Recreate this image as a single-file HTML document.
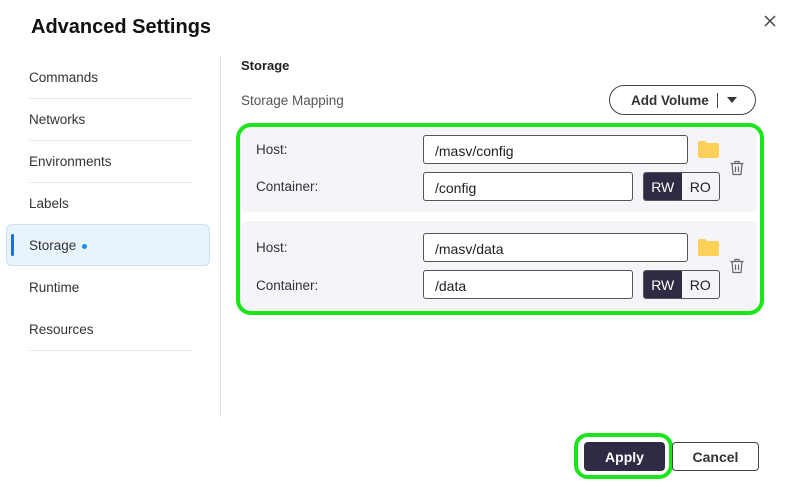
<!DOCTYPE html>
<html><head><style>
*{box-sizing:border-box;margin:0;padding:0}
body{width:791px;height:487px;background:#fff;font-family:"Liberation Sans",sans-serif;color:#222;position:relative;overflow:hidden}
.a{position:absolute}
.t{font-size:13.5px;color:#333}
.div{position:absolute;left:29px;width:163px;height:1px;background:#e3e8ee}
.inp{position:absolute;border:1px solid #555;border-radius:3px;background:#fff;font-size:14px;color:#222;padding:7px 11px 0;height:29px}
.panel{position:absolute;left:241px;width:516px;background:#f4f4f9;border-radius:5px}
.rw{position:absolute;left:643px;width:77px;height:29px;border:1px solid #555;border-radius:3px;display:flex;font-size:14px;overflow:hidden}
.rw span{flex:1;display:flex;align-items:center;justify-content:center}
.rw span:first-child{background:#2e2b45;color:#fff}
</style></head><body>
<div class="a" style="left:31px;top:16px;font-size:20px;font-weight:bold;color:#111">Advanced Settings</div>
<svg class="a" style="left:764px;top:15px" width="12" height="12"><path d="M1 1L11 11M11 1L1 11" stroke="#444" stroke-width="1.5"/></svg>

<div class="a t" style="left:29px;top:70px">Commands</div>
<div class="div" style="top:98px"></div>
<div class="a t" style="left:29px;top:112px">Networks</div>
<div class="div" style="top:140px"></div>
<div class="a t" style="left:29px;top:154px">Environments</div>
<div class="div" style="top:182px"></div>
<div class="a t" style="left:29px;top:196px">Labels</div>
<div class="a" style="left:6px;top:224px;width:204px;height:42px;background:#e8f4fc;border:1px solid #cfe0ea;border-radius:6px"></div>
<div class="a" style="left:11px;top:234px;width:3px;height:22px;background:#1b6fe0;border-radius:2px"></div>
<div class="a t" style="left:29px;top:238px">Storage <span style="display:inline-block;width:5px;height:5px;border-radius:50%;background:#1a8fe8;vertical-align:middle;margin-left:2px"></span></div>
<div class="a t" style="left:29px;top:280px">Runtime</div>
<div class="a t" style="left:29px;top:322px">Resources</div>
<div class="div" style="top:350px"></div>
<div class="a" style="left:220px;top:56px;width:1px;height:361px;background:#d6e3ea"></div>

<div class="a" style="left:241px;top:58px;font-size:13px;font-weight:bold;color:#222">Storage</div>
<div class="a t" style="left:241px;top:93px;color:#555">Storage Mapping</div>
<div class="a" style="left:609px;top:85px;width:147px;height:30px;border:1px solid #444;border-radius:15px;font-size:13.5px;font-weight:bold;color:#333;padding:7px 0 0 21px">Add Volume<span style="position:absolute;left:107px;top:7px;width:1px;height:15px;background:#444"></span><svg style="position:absolute;left:117px;top:11px" width="10" height="7"><path d="M0 0H10L5 6Z" fill="#333"/></svg></div>

<div class="panel" style="top:128px;height:84px"></div>
<div class="panel" style="top:221px;height:89px"></div>
<div class="a" style="left:236px;top:123px;width:528px;height:192px;border:4px solid #19e619;border-radius:15px"></div>

<div class="a t" style="left:256px;top:142px">Host:</div>
<div class="a t" style="left:256px;top:179px">Container:</div>
<div class="inp" style="left:423px;top:135px;width:265px">/masv/config</div>
<div class="inp" style="left:423px;top:172px;width:210px">/config</div>
<div class="rw" style="top:172px"><span>RW</span><span>RO</span></div>

<div class="a t" style="left:256px;top:240px">Host:</div>
<div class="a t" style="left:256px;top:278px">Container:</div>
<div class="inp" style="left:423px;top:233px;width:265px">/masv/data</div>
<div class="inp" style="left:423px;top:270px;width:210px">/data</div>
<div class="rw" style="top:270px"><span>RW</span><span>RO</span></div>

<svg class="a" style="left:698px;top:141px" width="21" height="17"><path d="M0 2Q0 0 2 0H7L9 2H19Q21 2 21 4V15Q21 17 19 17H2Q0 17 0 15Z" fill="#fdd158"/></svg>
<svg class="a" style="left:698px;top:239px" width="21" height="17"><path d="M0 2Q0 0 2 0H7L9 2H19Q21 2 21 4V15Q21 17 19 17H2Q0 17 0 15Z" fill="#fdd158"/></svg>
<svg class="a" style="left:729px;top:160px" width="16" height="16"><path d="M1.5 3.5H14.5M6 3.5V1.5H10V3.5M3 3.5L4 14.5H12L13 3.5M6.5 6.5V12M9.5 6.5V12" stroke="#666" stroke-width="1.2" fill="none"/></svg>
<svg class="a" style="left:729px;top:258px" width="16" height="16"><path d="M1.5 3.5H14.5M6 3.5V1.5H10V3.5M3 3.5L4 14.5H12L13 3.5M6.5 6.5V12M9.5 6.5V12" stroke="#666" stroke-width="1.2" fill="none"/></svg>

<div class="a" style="left:574px;top:433px;width:99px;height:46px;border:4px solid #19e619;border-radius:14px"></div>
<div class="a" style="left:584px;top:442px;width:81px;height:29px;background:#2e2b45;border-radius:4px;color:#fff;font-weight:bold;font-size:14px;text-align:center;line-height:30px">Apply</div>
<div class="a" style="left:672px;top:442px;width:87px;height:29px;border:1px solid #444;border-radius:4px;color:#333;font-weight:bold;font-size:14px;text-align:center;line-height:28px">Cancel</div>
</body></html>
